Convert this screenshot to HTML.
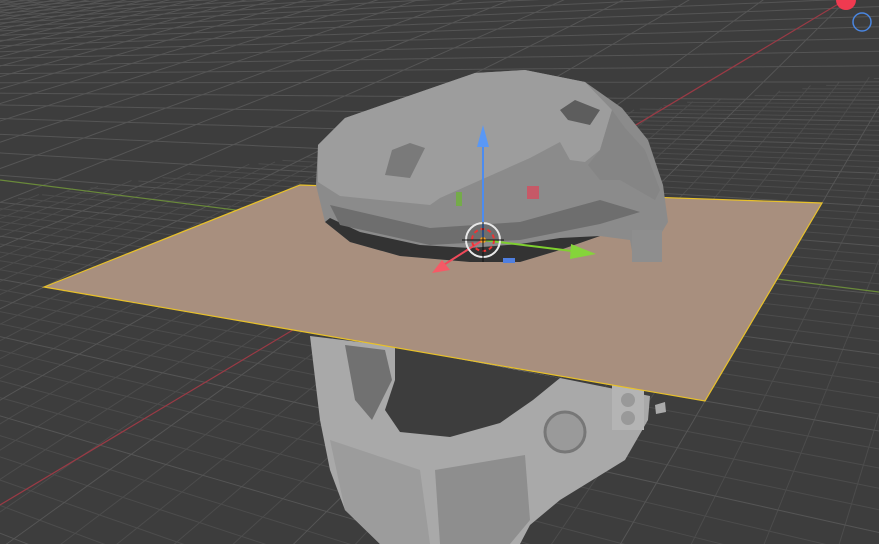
<!DOCTYPE html>
<html><head><meta charset="utf-8"><style>
html,body{margin:0;padding:0;background:#3d3d3d;width:879px;height:544px;overflow:hidden}
svg{display:block}
</style></head><body>
<svg id="s" width="879" height="544" viewBox="0 0 879 544" xmlns="http://www.w3.org/2000/svg" style="overflow:hidden">
<rect width="879" height="544" fill="#3d3d3d"/>
<g id="gridf" stroke="#4c4c4c" stroke-width="1" fill="none"></g>
<g id="gridc" stroke="#555" stroke-width="1" fill="none"></g>
<line x1="0" y1="180" x2="879" y2="292" stroke="#6a8a3a" stroke-width="1.2"/>
<line x1="845" y1="0" x2="0" y2="505" stroke="#9a3a45" stroke-width="1.2"/>
<!-- lower helmet -->
<path d="M310,336 L400,347 L560,378 L650,396 L648,420 L625,460 L560,500 L530,525 L520,544 L380,544 L345,510 L330,470 L320,420 Z" fill="#a9a9a9"/>
<path d="M395,347 L560,378 L533,400 L500,423 L450,437 L400,432 L385,410 L395,380 Z" fill="#3d3d3d"/>
<path d="M345,345 L385,350 L392,380 L372,420 L355,400 Z" fill="#5a5a5a" opacity="0.7"/>
<path d="M330,440 L420,470 L430,544 L380,544 L345,510 Z" fill="#9c9c9c"/>
<path d="M435,470 L525,455 L530,520 L510,544 L440,544 Z" fill="#8e8e8e"/>
<circle cx="565" cy="432" r="20" fill="#9a9a9a" stroke="#777" stroke-width="3"/>
<rect x="612" y="385" width="32" height="45" fill="#b4b4b4"/>
<circle cx="628" cy="400" r="7" fill="#999"/><circle cx="628" cy="418" r="7" fill="#999"/>
<path d="M655,405 L665,402 L666,412 L656,414 Z" fill="#aaa"/>
<!-- plane -->
<polygon points="44,287 300,185 822,203 705,401" fill="#a88f7e" stroke="#e8c12a" stroke-width="1.2"/>
<!-- upper helmet -->
<path d="M318,145 L345,118 L420,92 L475,73 L525,70 L585,82 L622,108 L648,140 L663,185 L668,222 L662,232 L662,258 L634,262 L630,240 L600,236 L560,250 L520,262 L470,262 L400,256 L350,242 L325,222 L316,185 Z" fill="#8b8b8b"/>
<path d="M318,145 L345,118 L420,92 L475,73 L525,70 L585,82 L612,110 L600,150 L585,162 L570,160 L560,142 L530,158 L440,198 L430,205 L340,196 L318,182 Z" fill="#9d9d9d"/>
<path d="M612,110 L625,128 L645,150 L660,190 L655,200 L620,180 L600,180 L588,165 L600,150 Z" fill="#858585"/>
<path d="M560,110 L575,100 L600,110 L590,125 L568,120 Z" fill="#5d5d5d"/>
<path d="M385,175 L392,150 L410,143 L425,148 L410,178 Z" fill="#7a7a7a"/>
<path d="M325,222 L350,242 L400,256 L470,262 L520,262 L560,250 L600,236 L560,238 L520,244 L470,248 L420,245 L360,232 L330,218 Z" fill="#333"/>
<path d="M330,205 L430,228 L520,222 L600,200 L640,212 L600,224 L520,240 L430,245 L340,225 Z" fill="#6e6e6e"/>
<rect x="632" y="230" width="30" height="32" fill="#8e8e8e"/>
<!-- gizmo -->
<line x1="483" y1="240" x2="483" y2="140" stroke="#4c8cf0" stroke-width="2"/>
<polygon points="483,125 477,147 489,147" fill="#5a98f5"/>
<line x1="483" y1="240" x2="580" y2="252" stroke="#7fd02f" stroke-width="2"/>
<polygon points="596,254 571,244 570,259" fill="#85d43a"/>
<line x1="483" y1="240" x2="442" y2="266" stroke="#f04a5a" stroke-width="2"/>
<polygon points="432,273 442,260 450,270" fill="#f55a66"/>
<rect x="456" y="192" width="6" height="14" fill="#6fb33a" opacity="0.8"/>
<rect x="527" y="186" width="12" height="13" fill="#d05060" opacity="0.85"/>
<rect x="503" y="258" width="12" height="5" fill="#4f7fe0"/>
<circle cx="483" cy="240" r="17" fill="none" stroke="#e8e8e8" stroke-width="2"/>
<circle cx="483" cy="240" r="11" fill="none" stroke="#e33" stroke-width="2" stroke-dasharray="4 3"/>
<circle cx="483" cy="240" r="3" fill="#f5a020"/>
<line x1="483" y1="222" x2="483" y2="262" stroke="#111" stroke-width="1"/>
<line x1="462" y1="240" x2="504" y2="240" stroke="#111" stroke-width="1"/>
<!-- nav gizmo -->
<circle cx="846" cy="0" r="10" fill="#f03a50"/>
<circle cx="862" cy="22" r="9" fill="none" stroke="#4a86e0" stroke-width="1.5"/>
</svg>
<script>
(function(){
 var P=[[44,287],[705,401],[822,203],[280,170]];
 var x0=P[0][0],y0=P[0][1],x1=P[1][0],y1=P[1][1],x2=P[2][0],y2=P[2][1],x3=P[3][0],y3=P[3][1];
 var dx1=x1-x2,dx2=x3-x2,dy1=y1-y2,dy2=y3-y2,sx=x0-x1+x2-x3,sy=y0-y1+y2-y3;
 var den=dx1*dy2-dx2*dy1;
 var g=(sx*dy2-dx2*sy)/den,h=(dx1*sy-sx*dy1)/den;
 var a=x1-x0+g*x1,b=x3-x0+h*x3,c=x0,d=y1-y0+g*y1,e=y3-y0+h*y3,f=y0;
 function m(u,v){var w=g*u+h*v+1;return w>0.02?[(a*u+b*v+c)/w,(d*u+e*v+f)/w,w]:null;}
 var N=20,fo="",co="";
 function line(fn,maxw){var pts=[],segs=[];
  for(var t=-10;t<=11;t+=0.04){var p=fn(t);
   var ok=p&&p[2]<maxw&&p[0]>-200&&p[0]<1100&&p[1]>-200&&p[1]<800;
   if(ok)pts.push(p[0].toFixed(1)+","+p[1].toFixed(1));
   else{if(pts.length>1)segs.push(pts);pts=[];}}
  if(pts.length>1)segs.push(pts);
  return segs.map(function(s){return '<polyline points="'+s.join(" ")+'"/>';}).join("");}
 for(var k=-200;k<=220;k++){var s=k/N;
  var coarse=(k%5===0);
  if(coarse){co+=line(function(t){return m(s,t);},99);co+=line(function(t){return m(t,s);},99);}
  else{fo+=line(function(t){return m(s,t);},1.35);fo+=line(function(t){return m(t,s);},1.35);}
 }
 document.getElementById("gridf").innerHTML=fo;
 document.getElementById("gridc").innerHTML=co;
})();
</script>
</body></html>
